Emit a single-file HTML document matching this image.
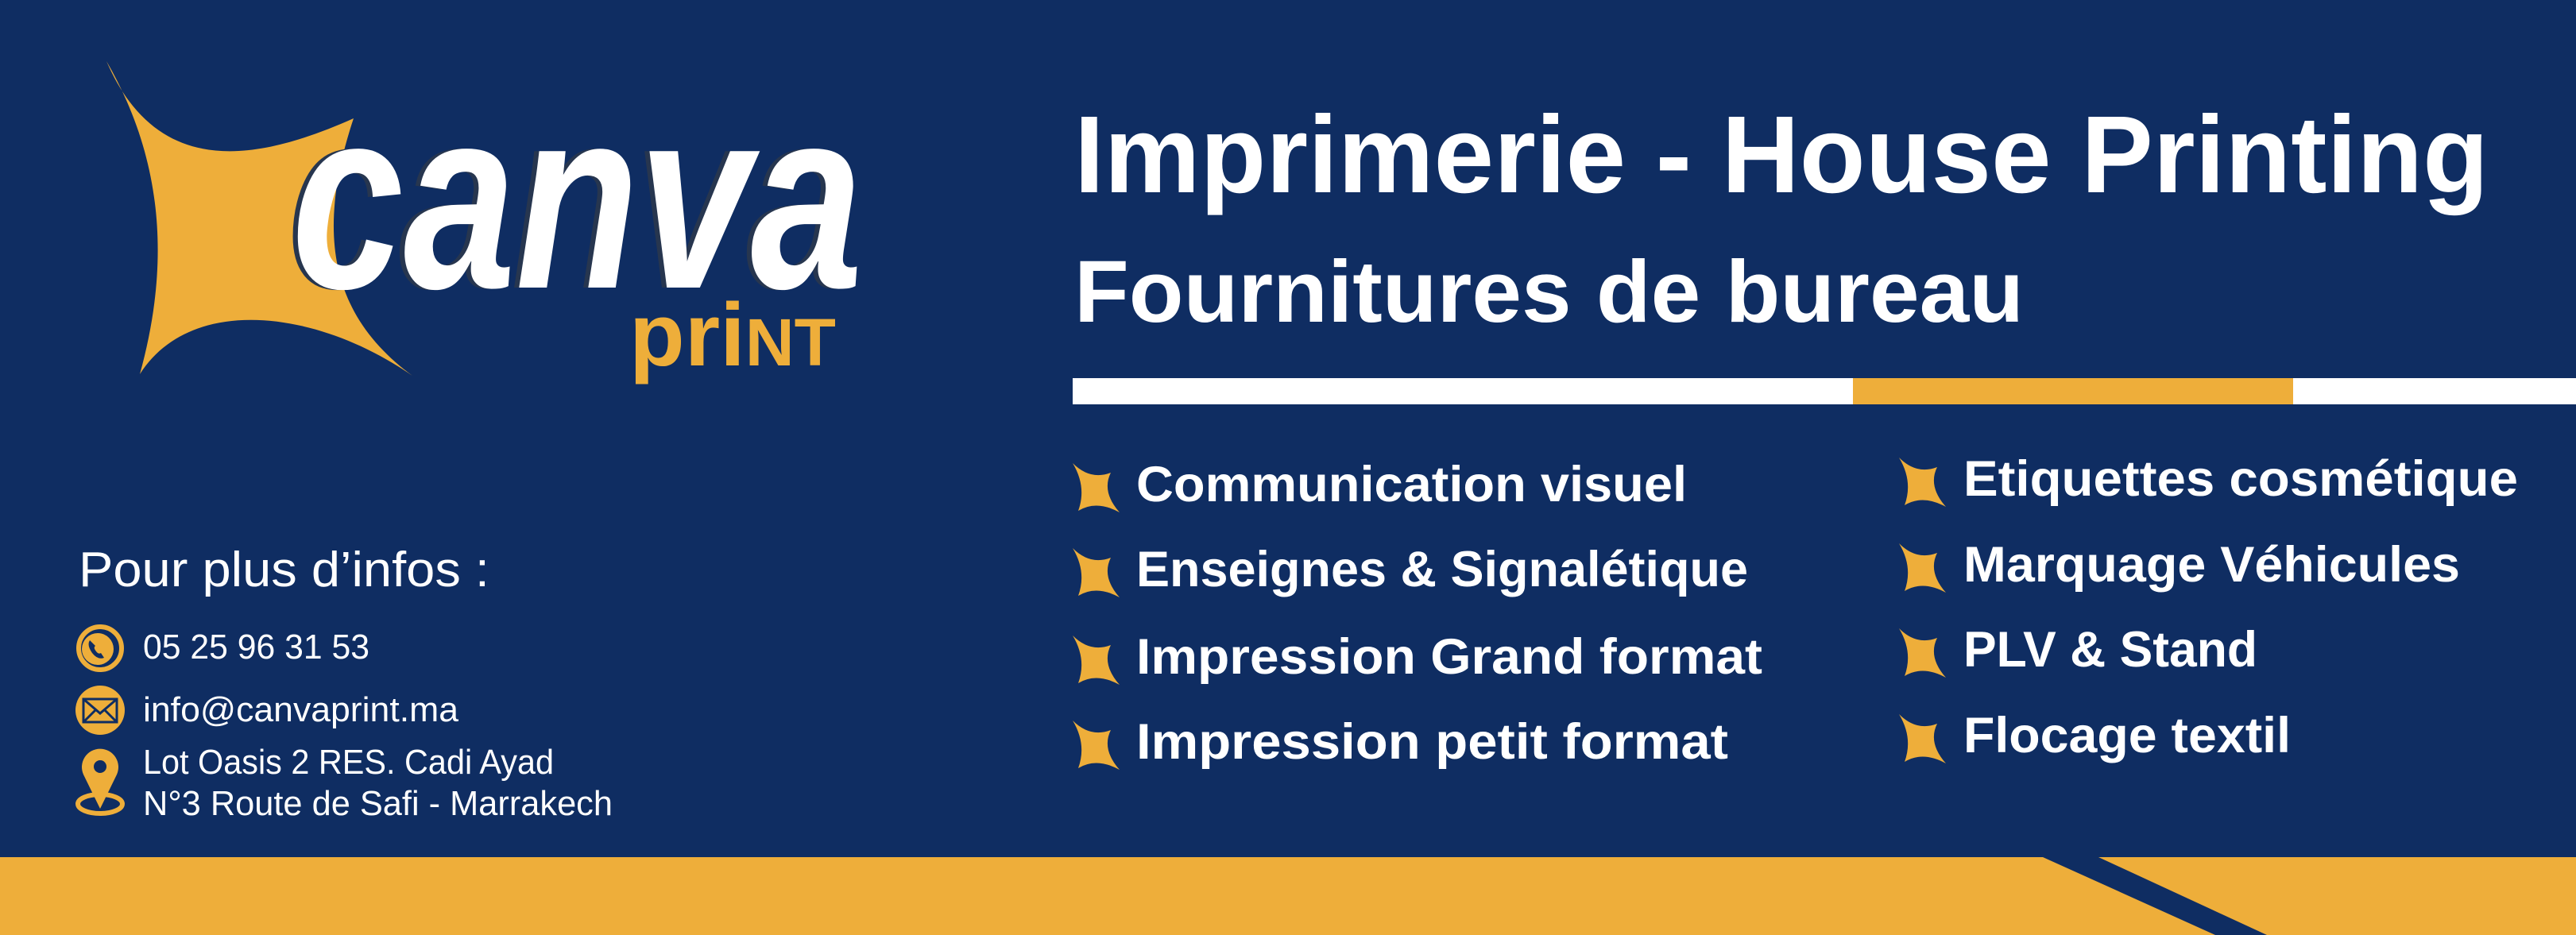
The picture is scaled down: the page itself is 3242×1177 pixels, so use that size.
<!DOCTYPE html>
<html><head><meta charset="utf-8"><style>
html,body{margin:0;padding:0;background:#0f2d62;}
svg{display:block}
</style></head><body>
<svg width="3242" height="1177" viewBox="0 0 3242 1177" xmlns="http://www.w3.org/2000/svg" font-family="'Liberation Sans', sans-serif">
<rect width="3242" height="1177" fill="#0f2d62"/>
<rect x="0" y="1079" width="3242" height="98" fill="#eeae3a"/>
<polygon points="2571,1079 2641,1079 2853,1177 2788,1177" fill="#0f2d62"/>
<path d="M134,77 C200,230 330,200 445,149 C395,300 420,400 519,473 C400,390 240,370 176,471 C215,330 205,200 134,77 Z" fill="#eeae3a"/>
<g transform="translate(367,362) scale(0.78,1)">
<text x="-8" y="0" font-size="325" font-weight="bold" font-style="italic" fill="#27364f">canva</text>
<text x="0" y="0" font-size="325" font-weight="bold" font-style="italic" fill="#ffffff">canva</text>
</g>
<text x="792" y="460" font-size="112" font-weight="bold" fill="#eeae3a" textLength="260" lengthAdjust="spacingAndGlyphs">pri<tspan font-size="84">NT</tspan></text>
<text x="1352" y="242" font-size="138" font-weight="bold" fill="#fff" textLength="1780" lengthAdjust="spacingAndGlyphs">Imprimerie - House Printing</text>
<text x="1352" y="405" font-size="110" font-weight="bold" fill="#fff" textLength="1195" lengthAdjust="spacingAndGlyphs">Fournitures de bureau</text>
<rect x="1350" y="476" width="1892" height="33" fill="#fff"/>
<rect x="2332" y="476" width="554" height="33" fill="#eeae3a"/>
<defs><path id="st" d="M0,0 Q22,22 48,12 Q36,36 59,62 Q30,46 7,60 Q18,30 0,0 Z" fill="#eeae3a"/></defs>
<use href="#st" x="1350" y="583"/>
<use href="#st" x="1350" y="690"/>
<use href="#st" x="1350" y="800"/>
<use href="#st" x="1350" y="907"/>
<use href="#st" x="2390" y="576"/>
<use href="#st" x="2390" y="684"/>
<use href="#st" x="2390" y="791"/>
<use href="#st" x="2390" y="899"/>
<g font-size="63" font-weight="bold" fill="#fff">
<text x="1430" y="631" textLength="693" lengthAdjust="spacingAndGlyphs">Communication visuel</text>
<text x="1430" y="738" textLength="770" lengthAdjust="spacingAndGlyphs">Enseignes &amp; Signalétique</text>
<text x="1430" y="848" textLength="788" lengthAdjust="spacingAndGlyphs">Impression Grand format</text>
<text x="1430" y="955" textLength="745" lengthAdjust="spacingAndGlyphs">Impression petit format</text>
<text x="2471" y="624" textLength="698" lengthAdjust="spacingAndGlyphs">Etiquettes cosmétique</text>
<text x="2471" y="732" textLength="625" lengthAdjust="spacingAndGlyphs">Marquage Véhicules</text>
<text x="2471" y="839" textLength="370" lengthAdjust="spacingAndGlyphs">PLV &amp; Stand</text>
<text x="2471" y="947" textLength="412" lengthAdjust="spacingAndGlyphs">Flocage textil</text>
</g>
<text x="99" y="738" font-size="62" fill="#fff" textLength="517" lengthAdjust="spacingAndGlyphs">Pour plus d’infos :</text>
<g font-size="44" fill="#fff">
<text x="180" y="829" textLength="285" lengthAdjust="spacingAndGlyphs">05 25 96 31 53</text>
<text x="180" y="908" textLength="397" lengthAdjust="spacingAndGlyphs">info@canvaprint.ma</text>
<text x="180" y="974" textLength="517" lengthAdjust="spacingAndGlyphs">Lot Oasis 2 RES. Cadi Ayad</text>
<text x="180" y="1026" textLength="591" lengthAdjust="spacingAndGlyphs">N°3 Route de Safi - Marrakech</text>
</g>
<circle cx="126" cy="816" r="27" fill="none" stroke="#eeae3a" stroke-width="6"/>
<circle cx="123" cy="817" r="20" fill="#eeae3a"/>
<path d="M113,806 q-4,6 3,16 q7,9 15,6 l-4,-6 q-3,2 -6,-2 q-4,-5 -1,-7 z" fill="#0f2d62"/>
<circle cx="126" cy="894" r="31" fill="#eeae3a"/>
<rect x="105" y="880" width="42" height="29" fill="none" stroke="#0f2d62" stroke-width="3"/>
<path d="M105,880 L126,898 L147,880 M105,909 L120,894 M147,909 L132,894" fill="none" stroke="#0f2d62" stroke-width="3"/>
<ellipse cx="126" cy="1012" rx="28" ry="12" fill="none" stroke="#eeae3a" stroke-width="6"/>
<path d="M126,1018 L105,975 A23,23 0 1 1 147,975 Z" fill="#eeae3a"/>
<circle cx="126" cy="965" r="8" fill="#0f2d62"/>
</svg>
</body></html>
